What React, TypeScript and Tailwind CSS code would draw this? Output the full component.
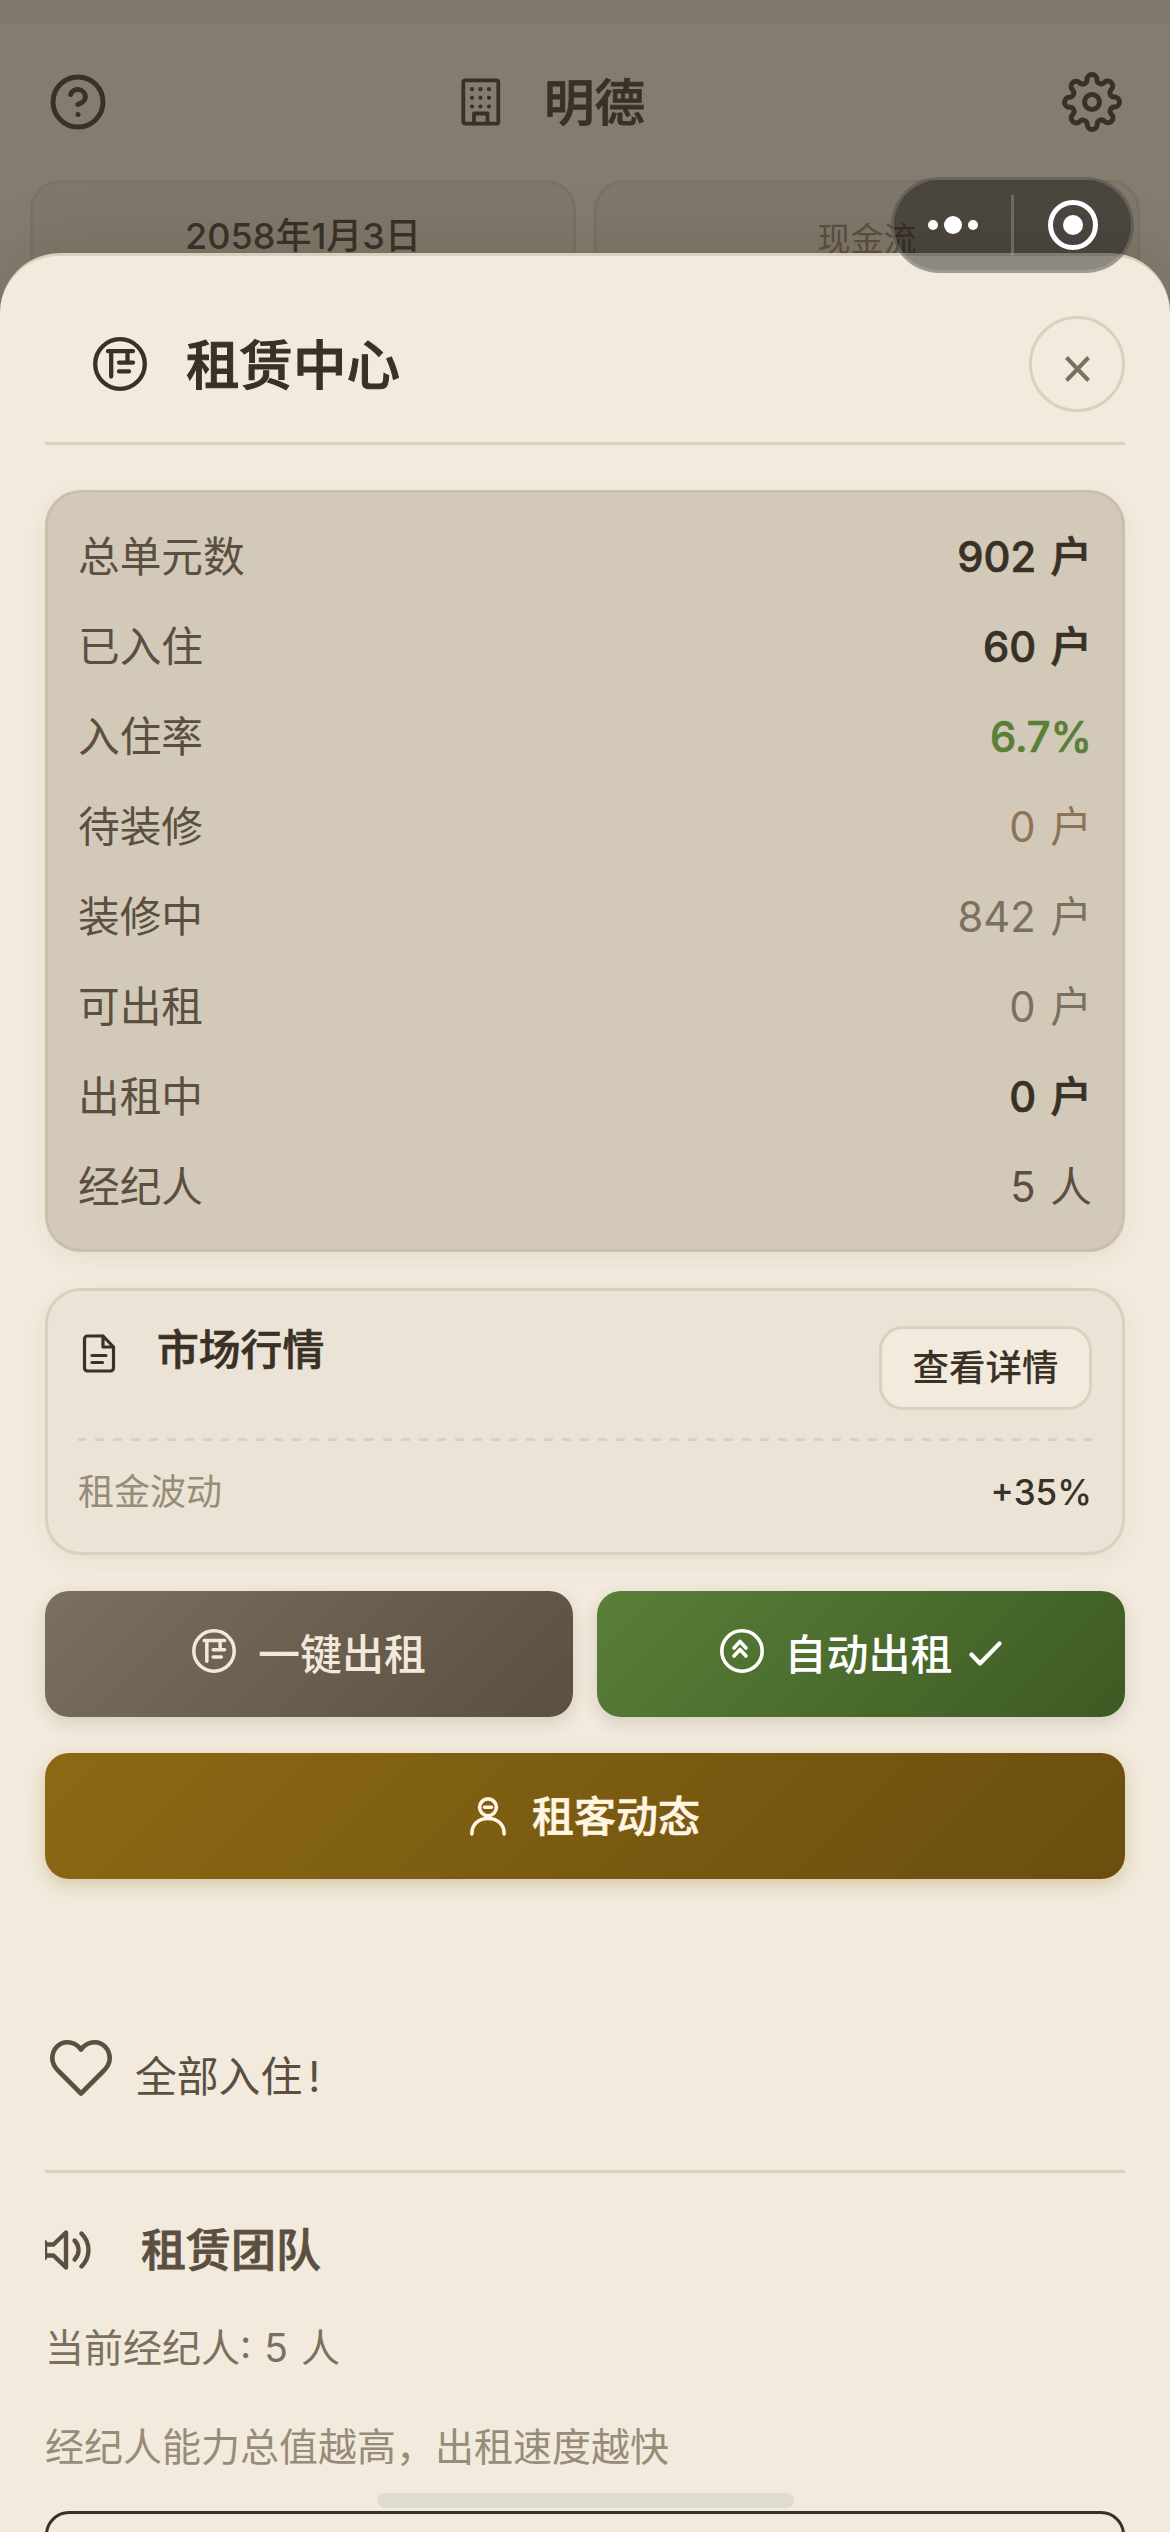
import React from "react";
import { FiHelpCircle, FiSettings } from "react-icons/fi";

const FONT = "font-['Inter','Noto_Sans_CJK_SC',sans-serif]";

function RentIcon({ size }: { size: number }) {
  return (
    <svg width={size} height={size} viewBox="0 0 54 54" fill="none" stroke="currentColor" strokeWidth={4.3} strokeLinecap="round" strokeLinejoin="round" className="shrink-0">
      <circle cx="27" cy="27" r="24.8" />
      <path d="M15 14.2H40M18.2 14.2V39.5M34.500 14.2V25.600M26 25.600H40M26 34.400H36" />
    </svg>
  );
}

function BuildingIcon() {
  return (
    <svg width="40" height="48" viewBox="0 0 40 48" fill="none" stroke="currentColor" strokeWidth="3.8" strokeLinejoin="round">
      <rect x="2.3" y="2.3" width="35" height="43.4" rx="2" />
      <path d="M13 45.5V35.5H26.5V45.5" />
      <g fill="currentColor" stroke="none">
        {[11, 19.5, 28].map((x) => [11.2, 19.8, 28.5].map((y) => <circle key={`${x}-${y}`} cx={x} cy={y} r="2.1" />))}
      </g>
    </svg>
  );
}

function DocumentIcon() {
  return (
    <svg width="42" height="42" viewBox="0 0 42 42" fill="none" stroke="currentColor" strokeWidth="3.2" strokeLinecap="round" strokeLinejoin="round">
      <path d="M25 4H9.500a3 3 0 0 0-3 3V36a3 3 0 0 0 3 3H32.500a3 3 0 0 0 3-3V15Z" />
      <path d="M25 4V15H35.500M14 23.500H28M14 30.500H24.500" />
    </svg>
  );
}

const stats = [
  { label: "总单元数", value: "902 户", style: "font-medium [-webkit-text-stroke:0.7px_currentColor] text-[#3a3126]" },
  { label: "已入住", value: "60 户", style: "font-medium [-webkit-text-stroke:0.7px_currentColor] text-[#3a3126]" },
  { label: "入住率", value: "6.7%", style: "font-medium [-webkit-text-stroke:0.7px_currentColor] text-[#5a7f38]" },
  { label: "待装修", value: "0 户", style: "text-[#8f7355]" },
  { label: "装修中", value: "842 户", style: "text-[#7b705f]" },
  { label: "可出租", value: "0 户", style: "text-[#7b705f]" },
  { label: "出租中", value: "0 户", style: "font-medium [-webkit-text-stroke:0.7px_currentColor] text-[#3a3126]" },
  { label: "经纪人", value: "5 人", style: "text-[#5a4f40]" },
];

function PageBehind() {
  return (
    <div className="absolute inset-0 bg-[#847c6f] text-[#3a3126]">
      <div className="h-6 bg-[#80786b]" />
      <div className="flex h-[156px] items-center justify-between px-12">
        <FiHelpCircle size={60} />
        <div className="flex items-center gap-[43px] pr-[64px]">
          <BuildingIcon />
          <span className="mt-[3px] text-[50.5px] leading-none font-medium [-webkit-text-stroke:0.8px_currentColor]">明德</span>
        </div>
        <FiSettings size={60} />
      </div>
      <div className="grid grid-cols-2 gap-[18px] px-[30px]">
        <div className="h-[200px] rounded-[30px] border-[3px] border-[#7a7264] bg-[#80786b] pt-[28px] text-center text-[36px] leading-[50px] font-medium">
          2058年1月3日
        </div>
        <div className="h-[200px] rounded-[30px] border-[3px] border-[#7a7264] bg-[#80786b] pt-[31px] text-center text-[33px] leading-[50px] text-[#5a4f40]">
          现金流
        </div>
      </div>
    </div>
  );
}

function Capsule() {
  return (
    <div className="absolute top-[177px] left-[891px] flex h-24 w-[243px] items-center rounded-full border-[3px] border-white/15 bg-black/41 bg-clip-border">
      <div className="flex flex-1 items-center justify-center gap-1.5">
        <i className="size-2.5 rounded-full bg-white" />
        <i className="size-[18px] rounded-full bg-white" />
        <i className="size-2.5 rounded-full bg-white" />
      </div>
      <div className="h-[60px] w-[3px] bg-white/20" />
      <div className="flex flex-1 items-center justify-center">
        <div className="flex size-[50px] items-center justify-center rounded-full border-[5px] border-white">
          <i className="size-5 rounded-full bg-white" />
        </div>
      </div>
    </div>
  );
}

export default function App() {
  return (
    <div className={`relative h-[2532px] w-[1170px] overflow-hidden ${FONT}`}>
      <PageBehind />
      <main className="relative mt-[253px] h-[2279px] overflow-hidden rounded-t-[60px] border-t-[3px] border-[#d9d0bd] bg-[#f2eadc] px-[45px] shadow-[0_-12px_60px_rgba(58,49,38,0.15)]">
        <header className="flex h-[189px] items-center justify-between border-b-[3px] border-[#d9d0bd] pb-[27px] pt-[57px] text-[#3a3126]">
          <div className="flex items-center gap-[39px] pl-12">
            <RentIcon size={54} />
            <h1 className="mt-[3px] text-[53.5px] leading-none font-medium [-webkit-text-stroke:1px_currentColor]">租赁中心</h1>
          </div>
          <button className="flex size-24 items-center justify-center rounded-full border-[3px] border-[#d9d0bd] text-[#7b705f]">
            <svg width="27" height="28" viewBox="0 0 27 28" stroke="currentColor" strokeWidth="4" className="mt-[9px]">
              <path d="M2.500 2.500 24.500 25.500M24.500 2.500 2.500 25.500" />
            </svg>
          </button>
        </header>

        <section className="mt-[45px] h-[762px] rounded-[36px] border-[3px] border-[#c9bfab] bg-[#d2c9b8] px-[30px] pt-[19.5px] shadow-[0_6px_24px_rgba(58,49,38,0.06)]">
          {stats.map((s) => (
            <div key={s.label} className="flex h-[90px] items-center justify-between text-[41.7px] leading-none">
              <span className="text-[#5a4f40]">{s.label}</span>
              <span className={`[word-spacing:3px] ${s.style}`}>{s.value}</span>
            </div>
          ))}
        </section>

        <section className="mt-9 h-[267px] rounded-[36px] border-[3px] border-[#d9d0bd] bg-[#ebe3d5] px-[30px] pt-[35px] shadow-[0_6px_24px_rgba(58,49,38,0.06)]">
          <div className="flex items-start justify-between text-[#3a3126]">
            <div className="flex items-start gap-[37px]">
              <div className="pt-[6px]"><DocumentIcon /></div>
              <h2 className="pt-1 text-[41.8px] leading-none font-medium [-webkit-text-stroke:0.7px_currentColor]">市场行情</h2>
            </div>
            <button className="h-[84px] w-[213px] rounded-[24px] border-[3px] border-[#d9d0bd] bg-[#f2eadc] text-[36.5px] leading-none font-medium">
              查看详情
            </button>
          </div>
          <div className="mt-7 h-[3px] bg-[repeating-linear-gradient(90deg,#d9d0bd_0_7.5px,transparent_7.5px_16.5px,#d9d0bd_16.5px_18px)]" />
          <div className="flex h-[102px] items-center justify-between text-[36px] leading-none">
            <span className="text-[#968c78]">租金波动</span>
            <span className="text-[35px] font-medium text-[#3a3126]">+35%</span>
          </div>
        </section>

        <div className="mt-9 grid grid-cols-2 gap-6 text-[42px] leading-none font-medium">
          <button className="flex h-[126px] items-center justify-center rounded-[24px] bg-linear-[135deg,#7b705f,#5a4f40] text-[#f2e9dc] shadow-[0_6px_18px_rgba(58,49,38,0.15)]">
            <span className="mr-[22px] -mt-1.5"><RentIcon size={44} /></span>
            <span className="pt-0.5">一键出租</span>
          </button>
          <button className="flex h-[126px] items-center justify-center rounded-[24px] bg-linear-[135deg,#5a7f38,#3d5a24] text-white shadow-[0_6px_18px_rgba(58,49,38,0.15)]">
            <svg width="44" height="44" viewBox="0 0 44 44" fill="none" stroke="currentColor" strokeWidth="3.6" strokeLinecap="round" strokeLinejoin="round" className="-mt-1.5 mr-[20px]">
              <circle cx="22" cy="22" r="20.2" />
              <path d="M14 19 20 12.5 26 19M14 27 20 20.5 26 27" />
            </svg>
            <span className="pt-0.5">自动出租</span>
            <svg width="33" height="26" viewBox="0 0 33 26" fill="none" stroke="currentColor" strokeWidth="4.2" strokeLinecap="round" strokeLinejoin="round" className="ml-4">
              <path d="M2.5 13.5 11 22.5 30.5 2.5" />
            </svg>
          </button>
        </div>
        <button className="mt-9 flex h-[126px] w-full items-center justify-center rounded-[24px] bg-linear-[135deg,#8b6914,#6b4e0f] text-[42px] leading-none font-medium text-[#fff5e1] shadow-[0_6px_18px_rgba(139,105,20,0.25)] [-webkit-text-stroke:0.6px_currentColor]">
          <svg width="36" height="39" viewBox="0 0 36 39" fill="none" stroke="currentColor" strokeWidth="3.6" strokeLinecap="round" className="mr-[26px]">
            <circle cx="18" cy="10.3" r="8.4" />
            <path d="M14.5 10.3H21.5M1.9 37V36C1.9 27 9 21.5 18 21.5S34.1 27 34.1 36V37" />
          </svg>
          <span className="pt-0.5">租客动态</span>
        </button>

        <section className="mt-[126px] flex h-[168px] items-start gap-[23px] border-b-[3px] border-[#d9d0bd] pt-[35px] pl-[5px] text-[#5a4f40]">
          <svg width="62" height="56" viewBox="0 0 62 56" fill="none" stroke="currentColor" strokeWidth="4.6" strokeLinecap="round" strokeLinejoin="round">
            <path d="M31 53.500 8.500 31C5 27.500 2.300 24 2.300 18.500 2.300 9 9 2.300 17.500 2.300 23.500 2.300 27.500 5 31 9.500 34.500 5 38.500 2.300 44.500 2.300 53 2.300 59.700 9 59.700 18.500 59.700 24 57 27.500 53.500 31Z" />
          </svg>
          <span className="mt-[17px] text-[41.8px] leading-none">全部入住<span className="ml-1.5">!</span></span>
        </section>

        <section className="pt-[53px]">
          <div className="flex items-center gap-[50px] text-[#5a4f40]">
            <svg width="46" height="44" viewBox="0 0 46 44" fill="none" stroke="currentColor" strokeWidth="4.4" strokeLinecap="round" strokeLinejoin="round">
              <path d="M2 16.500H8.500L21 4.500V39.500L8.500 27.500H2M0 14.300V29.700M29.700 12.500C34.800 18.500 34.800 25.500 29.700 31.500M36.500 5.500C45.800 15 45.800 29 36.500 38.500" />
            </svg>
            <h2 className="mt-0.5 text-[45px] leading-none font-medium [-webkit-text-stroke:0.8px_currentColor]">租赁团队</h2>
          </div>
          <p className="mt-[55px] text-[39px] leading-none text-[#7b705f] [word-spacing:2px]">当前经纪人: 5 人</p>
          <p className="mt-[60px] text-[39px] leading-none text-[#968c78]">经纪人能力总值越高，出租速度越快</p>
          <div className="mt-[45px] h-[120px] rounded-[24px] border-[3px] border-[#3a3126]" />
        </section>
      </main>
      <Capsule />
      <div className="absolute top-[2493px] left-[377px] h-[15px] w-[417px] rounded-full bg-[#e0dbcf]" />
    </div>
  );
}
